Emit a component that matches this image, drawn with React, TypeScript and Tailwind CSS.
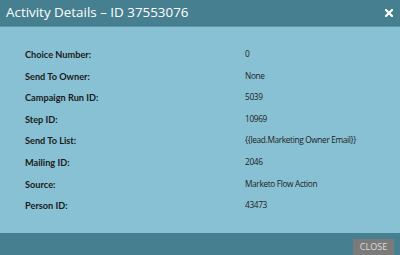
import React from "react";

const rows: [string, string][] = [
  ["Choice Number:", "0"],
  ["Send To Owner:", "None"],
  ["Campaign Run ID:", "5039"],
  ["Step ID:", "10969"],
  ["Send To List:", "{{lead.Marketing Owner Email}}"],
  ["Mailing ID:", "2046"],
  ["Source:", "Marketo Flow Action"],
  ["Person ID:", "43473"],
];

export default function App() {
  return (
    <div className="w-[400px] h-[255px] flex flex-col overflow-hidden bg-[#88c1d3]" style={{ fontFamily: '"Open Sans", sans-serif' }}>
      <div className="h-[27px] shrink-0 bg-[#467f8f] border-b border-[#5f98a8] flex items-center justify-between pl-[6px] pr-[7px]">
        <span className="text-white text-[13.4px] leading-none">Activity Details – ID 37553076</span>
        <svg width="8" height="8" viewBox="0 0 8 8">
          <path d="M1 1 L7 7 M7 1 L1 7" stroke="white" strokeWidth="2.2" strokeLinecap="square" />
        </svg>
      </div>
      <div className="flex-1 flex flex-col pt-[21px] pl-[25px]">
        {rows.map(([k, v]) => (
          <div key={k} className="flex h-[21.6px] items-start">
            <span className="w-[220px] text-[9.2px] font-bold text-[#1a1a1a]" style={{ fontFamily: '"Lato", sans-serif' }}>{k}</span>
            <span className="text-[8.3px] tracking-[-0.35px] text-[#222]">{v}</span>
          </div>
        ))}
      </div>
      <div className="h-[22px] shrink-0 bg-[#467f8f] flex items-end justify-end pr-[6px]">
        <div className="h-[16px] w-[41px] bg-[#7a7a7a] text-[#ddd] text-[9px] flex items-center justify-center">CLOSE</div>
      </div>
    </div>
  );
}
